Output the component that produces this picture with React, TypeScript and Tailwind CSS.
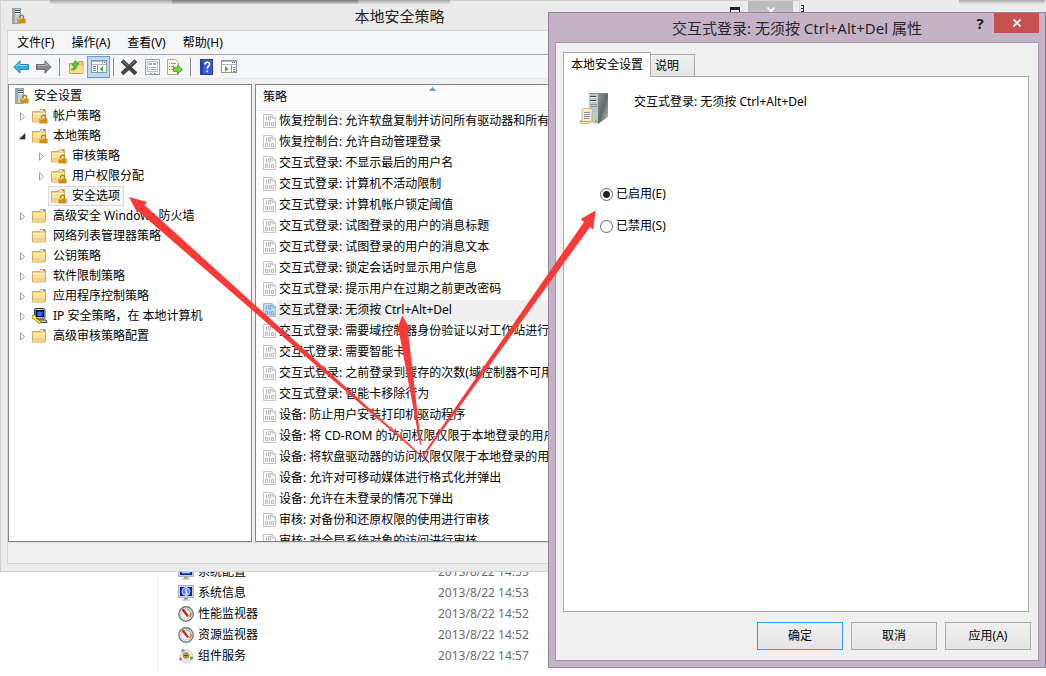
import React, { useState } from "react";

const policies = [
  "恢复控制台: 允许软盘复制并访问所有驱动器和所有文件夹",
  "恢复控制台: 允许自动管理登录",
  "交互式登录: 不显示最后的用户名",
  "交互式登录: 计算机不活动限制",
  "交互式登录: 计算机帐户锁定阈值",
  "交互式登录: 试图登录的用户的消息标题",
  "交互式登录: 试图登录的用户的消息文本",
  "交互式登录: 锁定会话时显示用户信息",
  "交互式登录: 提示用户在过期之前更改密码",
  "交互式登录: 无须按 Ctrl+Alt+Del",
  "交互式登录: 需要域控制器身份验证以对工作站进行解锁",
  "交互式登录: 需要智能卡",
  "交互式登录: 之前登录到缓存的次数(域控制器不可用时)",
  "交互式登录: 智能卡移除行为",
  "设备: 防止用户安装打印机驱动程序",
  "设备: 将 CD-ROM 的访问权限仅限于本地登录的用户",
  "设备: 将软盘驱动器的访问权限仅限于本地登录的用户",
  "设备: 允许对可移动媒体进行格式化并弹出",
  "设备: 允许在未登录的情况下弹出",
  "审核: 对备份和还原权限的使用进行审核",
  "审核: 对全局系统对象的访问进行审核",
];

type NodeIcon = "lock" | "folder" | "ip";
type TreeNode = {
  label: string;
  level: 1 | 2;
  icon: NodeIcon;
  state: "closed" | "open" | "leaf";
  selected?: boolean;
};

const tree: TreeNode[] = [
  { label: "帐户策略", level: 1, icon: "lock", state: "closed" },
  { label: "本地策略", level: 1, icon: "lock", state: "open" },
  { label: "审核策略", level: 2, icon: "lock", state: "closed" },
  { label: "用户权限分配", level: 2, icon: "lock", state: "closed" },
  { label: "安全选项", level: 2, icon: "lock", state: "leaf", selected: true },
  { label: "高级安全 Windows 防火墙", level: 1, icon: "folder", state: "closed" },
  { label: "网络列表管理器策略", level: 1, icon: "folder", state: "leaf" },
  { label: "公钥策略", level: 1, icon: "folder", state: "closed" },
  { label: "软件限制策略", level: 1, icon: "folder", state: "closed" },
  { label: "应用程序控制策略", level: 1, icon: "folder", state: "closed" },
  { label: "IP 安全策略，在 本地计算机", level: 1, icon: "ip", state: "closed" },
  { label: "高级审核策略配置", level: 1, icon: "folder", state: "closed" },
];

const tools = [
  { name: "系统配置", date: "2013/8/22 14:53", icon: "config" },
  { name: "系统信息", date: "2013/8/22 14:53", icon: "info" },
  { name: "性能监视器", date: "2013/8/22 14:52", icon: "gauge" },
  { name: "资源监视器", date: "2013/8/22 14:52", icon: "gauge" },
  { name: "组件服务", date: "2013/8/22 14:57", icon: "component" },
];

function Padlock({ x, y }: { x: number; y: number }) {
  return (
    <g transform={`translate(${x} ${y})`}>
      <path d="M2 4.500V2.800a2 2 0 0 1 4 0v1.700" fill="none" stroke="#a8801e" strokeWidth="1.400" />
      <rect x="0" y="4" width="8" height="5" fill="#e0a526" />
      <path d="M0 5.500h8M0 7.500h8" stroke="#b57f12" strokeWidth="1" />
      <rect x="0.500" y="4" width="3" height="1" fill="#f8d877" />
    </g>
  );
}

function ServerLockIcon() {
  return (
    <svg width="14" height="16" viewBox="0 0 14 16" className="shrink-0" aria-hidden="true">
      <rect x="0.500" y="0.500" width="8" height="15" fill="#c3cdd3" stroke="#93a1a9" />
      <rect x="1" y="1" width="2" height="14" fill="#9aabb5" />
      <path d="M3 2.500h5M3 4.500h5" stroke="#3a4b54" />
      <path d="M3 3.500h5M3 5.500h5" stroke="#f3fafc" />
      <rect x="5" y="11" width="2" height="1" fill="#3bc449" />
      <Padlock x={5.5} y={6.5} />
    </svg>
  );
}

function FolderIcon({ locked }: { locked?: boolean }) {
  return (
    <svg width="16" height="16" viewBox="1 0 16 16" className="shrink-0" aria-hidden="true">
      <path d="M1.500 3.500h7l1-2h5v12.500h-13z" fill="#f0cf84" stroke="#d3ac5e" />
      <path d="M10 2.500h4" stroke="#fff" />
      <rect x="12" y="2" width="2" height="1" fill="#4a93d8" />
      <path d="M2 5h12v8.500H2z" fill="#fae3a2" />
      <path d="M2 10h12v3.500H2z" fill="#f4d487" />
      <path d="M2 5.500h12" stroke="#fff3c8" />
      {locked && <Padlock x={8.5} y={6.5} />}
    </svg>
  );
}

function IpIcon() {
  return (
    <svg width="16" height="16" viewBox="1 0 16 16" className="shrink-0" aria-hidden="true">
      <path d="M4 .5h9l1 1.500v8l-1.500 1H3.500V1z" fill="#bdbdbd" stroke="#444" />
      <rect x="5" y="2.500" width="7.500" height="6" fill="#0a17d6" stroke="#111" />
      <path d="M6.500 5h5M6.500 7h4" stroke="#5ad4ff" />
      <path d="M5 12h10l1 2.500H7z" fill="#d5d5d5" stroke="#444" />
      <path d="M1 7.500l2-1 2 1.500v2l5 4-1 1.500-2-.5-4-4-2-.5z" fill="#f5ee28" stroke="#5f5a00" strokeWidth=".6" />
    </svg>
  );
}

function PolicyIcon({ selected }: { selected?: boolean }) {
  const ink = selected ? "#7ba7d2" : "#b9b9bf";
  return (
    <svg width="14" height="14" viewBox="0 0 14 14" className="shrink-0" aria-hidden="true">
      <path d="M.5.500h8.500l3.500 3.500v9.500H.5z" fill={selected ? "#bfdcf7" : "#fafafa"} stroke={selected ? "#8fb9e0" : "#c6c6ca"} />
      <path d="M9 .5v3.500h3.500" fill="none" stroke={ink} />
      <path d="M3.500 2.500v4M5.500 2.500h2v3.500h-2zM2.500 8.500h2v3h-2zM6.500 8v4M8.500 8.500h2v3h-2z" fill="none" stroke={ink} />
    </svg>
  );
}

function ToolIcon({ kind }: { kind: string }) {
  if (kind === "gauge")
    return (
      <svg width="16" height="16" viewBox="0 0 16 16" className="shrink-0" aria-hidden="true">
        <circle cx="8" cy="8" r="7.200" fill="#f7f7f5" stroke="#777" strokeWidth="1.400" />
        <circle cx="8" cy="8" r="5.200" fill="none" stroke="#c9c4b7" />
        <path d="M8 3a5 5 0 0 1 4 8" fill="none" stroke="#91a287" />
        <path d="M12.800 7a5 5 0 0 1-1 4" fill="none" stroke="#e76c2c" strokeWidth="1.300" />
        <path d="M3.500 4l2-1.500 5.500 7.500-1.800 1z" fill="#cf1c1c" />
      </svg>
    );
  if (kind === "component")
    return (
      <svg width="16" height="16" viewBox="0 0 16 16" className="shrink-0" aria-hidden="true">
        <circle cx="8.500" cy="8.500" r="6.500" fill="#e3e8ea" stroke="#ccd3d7" />
        <circle cx="5" cy="2.500" r="1.800" fill="#8f9bdf" />
        <circle cx="2.500" cy="11" r="1.600" fill="#dc6767" />
        <circle cx="13.500" cy="10" r="1.600" fill="#4caa50" />
        <circle cx="8" cy="7.500" r="2.800" fill="#efc52c" stroke="#85681b" strokeWidth=".8" />
        <path d="M8 5.500v4M6 7.500h4" stroke="#644b0b" />
      </svg>
    );
  return (
    <svg width="16" height="16" viewBox="0 0 16 16" className="shrink-0" aria-hidden="true">
      <rect x=".5" y=".5" width="15" height="12" fill="#d3d1c6" stroke="#b5b5ae" />
      <rect x="2" y="2" width="12" height="9" fill="#0d1eaf" />
      {kind === "info" ? (
        <>
          <circle cx="8" cy="6.500" r="4" fill="#5683f2" stroke="#d5e5ff" />
          <path d="M8 3.800v1.200M7 6h1.500v3M6.800 9h3" fill="none" stroke="#fff" strokeWidth="1.200" />
        </>
      ) : (
        <path d="M4 3h8v6H4z" fill="#e9f1ff" stroke="#6caaff" />
      )}
      <path d="M6 13h4v1.500H6z" fill="#999" />
      <path d="M4 15h8" stroke="#aaa" />
    </svg>
  );
}

function ArrowGlyph({ back }: { back?: boolean }) {
  return (
    <svg width="16" height="14" viewBox="0 0 16 14" aria-hidden="true">
      <path
        d={back ? "M.8 7L7 .8v3.700h8.500v5H7v3.700z" : "M15.200 7L9 .8v3.700H.5v5H9v3.700z"}
        fill={back ? "#35acef" : "#8b8b8b"}
        stroke={back ? "#2b85bd" : "#6b6b6b"}
      />
      <path d={back ? "M3 6.500L6 3.500v2h8" : "M2 5.500h8v-2l3 3"} fill="none" stroke={back ? "#8edbfc" : "#b5b5b5"} />
    </svg>
  );
}

function FolderUpGlyph() {
  return (
    <svg width="15" height="16" viewBox="0 0 15 16" aria-hidden="true">
      <path d="M.5 4.500h8l1-2h4.500v12H.5z" fill="#f0cc7a" stroke="#c9a558" />
      <path d="M1 7h13v7H1z" fill="#f8dc92" />
      <path d="M2.500 10c1.800-.5 2.500-1.500 2.500-4H3L6.500 1.500 10 5 8 6c0 3.500-2 5.500-5.500 5z" fill="#4fcb3a" stroke="#2f9a28" strokeWidth=".7" />
    </svg>
  );
}

function PaneGlyph({ right }: { right?: boolean }) {
  return (
    <svg width="16" height="14" viewBox="0 0 16 14" aria-hidden="true">
      <rect x=".5" y=".5" width="15" height="12" fill="#fdfdfd" stroke="#8d949d" />
      <path d="M1 1.500h14M1 4.500h14" stroke="#b2b9c1" />
      <path d="M11 2.500h1m1 0h1" stroke="#4b5c72" />
      {right ? (
        <>
          <path d="M10.500 5v8" stroke="#8b929a" />
          <path d="M12 7.500h2.500M12 9.500h2.500M12 11.500h2.500" stroke="#5580b1" />
          <path d="M4 6v6l3.500-3z" fill="#45b336" />
        </>
      ) : (
        <>
          <path d="M6.500 5v8" stroke="#8b929a" />
          <path d="M2 6.500h3M2 8.500h3M2 10.500h3" stroke="#5580b1" />
          <path d="M12 6v6L8.500 9z" fill="#45b336" />
        </>
      )}
    </svg>
  );
}

function DeleteGlyph() {
  return (
    <svg width="16" height="16" viewBox="0 0 16 16" aria-hidden="true">
      <path d="M2.500 3l11 10.500M13.500 3L2.500 13.500" stroke="#454545" strokeWidth="4" strokeLinecap="square" />
      <path d="M2.500 2.500l5 4.500M13.500 2.500L9 6.500" stroke="#808080" strokeWidth="1" />
    </svg>
  );
}

function PropertiesGlyph() {
  return (
    <svg width="15" height="16" viewBox="0 0 15 16" aria-hidden="true">
      <rect x=".5" y=".5" width="14" height="15" fill="#fff" stroke="#9a9fa4" />
      <rect x="2.500" y="2.500" width="10" height="10" fill="#f3f5f7" stroke="#bcc2c8" />
      <path d="M4 4h3v2H4zM8 4h3v2H8z" fill="#a2acb7" />
      <path d="M4 8.500h1M6 8.500h5M4 10.500h1M6 10.500h5" stroke="#98a6b5" />
      <path d="M5 14.500h2M9 14.500h2" stroke="#58bbe9" />
    </svg>
  );
}

function ExportGlyph() {
  return (
    <svg width="16" height="16" viewBox="0 0 16 16" aria-hidden="true">
      <path d="M.5.500h8l3 3v12H.5z" fill="#fffbe2" stroke="#b0aa92" />
      <path d="M2 4.500h1M4 4.500h5M2 7.500h1M4 7.500h3M2 10.500h1M4 10.500h3" stroke="#8b8fbb" />
      <path d="M6.500 8.500h4V6l5 4.500-5 4.500v-2.500h-4z" fill="#6adb3e" stroke="#3f9d24" strokeWidth=".8" />
    </svg>
  );
}

function HelpGlyph() {
  return (
    <svg width="13" height="16" viewBox="0 0 13 16" aria-hidden="true">
      <rect x=".5" y=".5" width="12" height="15" fill="#3f5bcf" stroke="#2a3f9c" />
      <path d="M1 1h2v14H1z" fill="#263c9e" />
      <path d="M5 5.500c0-3 4.500-3 4.500-.3 0 2-2.200 2-2.200 4.500M7.300 11.500v1.700" fill="none" stroke="#fff" strokeWidth="1.600" />
    </svg>
  );
}

function ServerScrollIcon() {
  return (
    <svg width="32" height="32" viewBox="0 0 32 32" className="shrink-0" aria-hidden="true">
      <defs>
        <linearGradient id="tower" x1="0" x2="1" y1="0" y2="1">
          <stop offset="0" stopColor="#8f9896" />
          <stop offset=".5" stopColor="#616b69" />
          <stop offset="1" stopColor="#c2cccb" />
        </linearGradient>
      </defs>
      <path d="M10 1h19l-1 1-9 1-9-1z" fill="#87938f" />
      <path d="M10 2h9v30l-9-2z" fill="#bccace" />
      <path d="M19 2l10-1v24l-10 7z" fill="url(#tower)" />
      <path d="M11 4.500h6M11 8.500h6" stroke="#38474d" />
      <path d="M11 5.500h6M11 9.500h6" stroke="#f2f8f9" />
      <path d="M11 12.500h7M11 14.500h7" stroke="#8597a0" />
      <rect x="16" y="28" width="2" height="2" fill="#70cf22" />
      <path d="M3 17.500c1-1.500 9-1.500 11 0 1 1 0 2-1 2v9.500l-2 2.500H2c-2-1-1.500-4 1-3z" fill="#f5eac6" stroke="#bda86b" strokeWidth=".8" />
      <path d="M5 20.500h6M5 22.500h6M5 24.500h6M5 26.500h5" stroke="#8390ae" />
      <path d="M1 29.500h10.500" stroke="#c6ad6b" />
    </svg>
  );
}

function ToolButton({ label, active, children }: { label: string; active?: boolean; children: React.ReactNode }) {
  return (
    <button
      type="button"
      aria-label={label}
      aria-pressed={active}
      className={
        active
          ? "flex h-[22px] w-[23px] items-center justify-center border border-[#5fa0de] bg-[#bcdaf5]"
          : "flex h-[22px] w-4 items-center justify-center"
      }
    >
      {children}
    </button>
  );
}

function Divider() {
  return <span className="h-[18px] w-px bg-[#8c8c8c]" />;
}

function Expander({ state }: { state: TreeNode["state"] }) {
  if (state === "leaf") return <span className="w-2.5" />;
  return (
    <button type="button" aria-label={state === "open" ? "折叠" : "展开"} className="w-2.5">
      <svg width="7" height="9" viewBox="0 0 7 9" aria-hidden="true">
        {state === "open" ? (
          <path d="M6 1.500v5.500H.5z" fill="#2b2b2b" stroke="#2b2b2b" strokeWidth=".6" />
        ) : (
          <path d="M1.500.800v7.400L5.500 4.500z" fill="#fff" stroke="#a0a0a0" />
        )}
      </svg>
    </button>
  );
}

function TreePane() {
  return (
    <nav aria-label="安全设置" className="w-[244px] shrink-0 border border-[#828790] bg-white pt-px">
      <div className="flex h-5 items-center gap-[5px] pl-1.5">
        <ServerLockIcon />
        <span>安全设置</span>
      </div>
      <ul>
        {tree.map((node) => (
          <li key={node.label} className={node.level === 1 ? "flex h-5 items-center pl-2.5" : "flex h-5 items-center pl-[29px]"}>
            <Expander state={node.state} />
            <span
              className={
                node.selected
                  ? "flex h-5 items-center gap-[5px] border border-[#d9d9d9] bg-[#f7f7f7] pr-[3px] pl-0.5"
                  : "flex h-5 items-center gap-[5px] border border-transparent pl-0.5"
              }
            >
              {node.icon === "ip" ? <IpIcon /> : <FolderIcon locked={node.icon === "lock"} />}
              <span className="whitespace-nowrap">{node.label}</span>
            </span>
          </li>
        ))}
      </ul>
    </nav>
  );
}

function PolicyPane() {
  return (
    <div className="min-w-0 flex-1 overflow-hidden border border-[#828790] bg-white">
      <table className="w-full border-collapse">
        <thead>
          <tr>
            <th className="relative h-[25px] border-b border-[#e3eefa] bg-[#fcfcfc] p-0 pl-[7px] text-left font-normal">
              策略
              <svg width="7" height="4" viewBox="0 0 7 4" className="absolute top-0.5 left-[173px]" aria-hidden="true">
                <path d="M0 4l3.500-4L7 4z" fill="#5c9cbd" />
              </svg>
            </th>
          </tr>
        </thead>
        <tbody>
          {policies.map((policy, index) => (
            <tr key={policy}>
              <td className="h-[21px] p-0">
                <div className="flex h-[21px] items-center pl-[7px]">
                  <PolicyIcon selected={index === 9} />
                  <span
                    className={
                      index === 9
                        ? "flex h-[21px] flex-1 items-center bg-[#efefef] pl-0.5 whitespace-nowrap"
                        : "flex h-[21px] flex-1 items-center pl-0.5 whitespace-nowrap"
                    }
                  >
                    {policy}
                  </span>
                </div>
              </td>
            </tr>
          ))}
        </tbody>
      </table>
    </div>
  );
}

function ConsoleWindow() {
  return (
    <section className="absolute top-0 left-0 w-[800px] border border-[#d0d0d0] bg-[#ebebeb] px-1.5 pb-[7px]">
      <header className="relative flex h-[29px] items-center pl-[5px]">
        <ServerLockIcon />
        <h1 className="flex-1 pr-5 text-center text-[15px] text-[#222]">本地安全策略</h1>
        <div className="absolute top-0 right-0 flex items-start">
          <button type="button" aria-label="最大化" className="flex h-5 w-[27px] items-center justify-center">
            <span className="h-2 w-2.5 border border-t-3 border-[#222]" />
          </button>
          <button type="button" aria-label="关闭" className="flex h-5 w-[45px] items-center justify-center bg-[#bcbcbc] text-white">
            <svg width="8" height="8" viewBox="0 0 8 8" aria-hidden="true">
              <path d="M.5.500l7 7M7.500.500l-7 7" stroke="currentColor" strokeWidth="1.600" />
            </svg>
          </button>
        </div>
      </header>
      <div className="border border-[#d5d5d5] bg-[#f0f0f0]">
        <menu className="flex h-6 items-center gap-[17px] border-b border-[#a9abb0] bg-[#f5f6f7] pl-[9px]">
          {["文件(F)", "操作(A)", "查看(V)", "帮助(H)"].map((item) => (
            <li key={item}>
              <button type="button">{item}</button>
            </li>
          ))}
        </menu>
        <div className="flex h-[23px] items-end bg-[#f5f6f7] pl-[5px]">
          <div className="flex items-center gap-[7px]">
            <ToolButton label="后退"><ArrowGlyph back /></ToolButton>
            <ToolButton label="前进"><ArrowGlyph /></ToolButton>
            <Divider />
          </div>
          <div className="flex items-center gap-[3px] pl-2">
            <ToolButton label="上移一级"><FolderUpGlyph /></ToolButton>
            <ToolButton label="显示/隐藏控制台树" active><PaneGlyph /></ToolButton>
            <Divider />
          </div>
          <div className="flex items-center gap-[7px] pl-[7px]">
            <ToolButton label="删除"><DeleteGlyph /></ToolButton>
            <ToolButton label="属性"><PropertiesGlyph /></ToolButton>
            <ToolButton label="导出列表"><ExportGlyph /></ToolButton>
            <Divider />
            <ToolButton label="帮助"><HelpGlyph /></ToolButton>
            <ToolButton label="显示/隐藏操作窗格"><PaneGlyph right /></ToolButton>
          </div>
        </div>
        <div className="flex h-[464px] gap-[3px] border-t border-[#e3e5e8] pt-[5px]">
          <TreePane />
          <PolicyPane />
        </div>
        <footer className="h-[21px] border-t border-[#dcdcdc]" />
      </div>
    </section>
  );
}

function ExplorerList() {
  return (
    <section className="absolute top-[561px] left-[158px] w-[390px] border-l border-[#f2f2f2] pb-2">
      <table className="w-full border-collapse">
        <tbody>
          {tools.map((tool) => (
            <tr key={tool.name}>
              <td className="h-[21px] p-0">
                <div className="flex items-center gap-1 pl-[19px]">
                  <ToolIcon kind={tool.icon} />
                  <span>{tool.name}</span>
                </div>
              </td>
              <td className="h-[21px] w-[110px] p-0 whitespace-nowrap text-[#6d6d6d]">{tool.date}</td>
            </tr>
          ))}
        </tbody>
      </table>
    </section>
  );
}

function PropertiesDialog() {
  const [enabled, setEnabled] = useState(true);
  const radio =
    "size-[13px] shrink-0 appearance-none rounded-full border border-[#666] bg-white checked:bg-[radial-gradient(circle,#222_0_3px,#fff_4px)]";
  const button = "h-7 w-[86px] border bg-linear-to-b from-[#f0f0f0] to-[#e4e4e4]";
  return (
    <section
      role="dialog"
      aria-labelledby="dialog-title"
      className="absolute top-3 left-[548px] w-[498px] border border-[#91859a] bg-[#c3b3c5] px-1.5 pb-1.5"
    >
      <header className="relative flex h-[29px] items-center justify-center">
        <h2 id="dialog-title" className="text-[15px] text-[#2b262c]">
          交互式登录: 无须按 Ctrl+Alt+Del 属性
        </h2>
        <div className="absolute top-0 right-0 flex items-center">
          <button type="button" aria-label="帮助" className="h-5 w-7 font-bold text-[#222] text-[15px] leading-5">
            ?
          </button>
          <button type="button" aria-label="关闭" className="flex h-5 w-[45px] items-center justify-center bg-[#c75050]">
            <svg width="8" height="8" viewBox="0 0 8 8" aria-hidden="true">
              <path d="M.5.500l7 7M7.500.500l-7 7" stroke="#fff" strokeWidth="1.600" />
            </svg>
          </button>
        </div>
      </header>
      <div className="border border-[#a596a8] bg-[#f0f0f0] pt-[9px] pb-2.5 pl-[7px]">
        <div role="tablist" className="flex items-end">
          <button
            type="button"
            role="tab"
            aria-selected="true"
            className="z-10 h-[25px] w-[88px] border border-b-0 border-[#acacac] bg-white pl-[7px] text-left"
          >
            本地安全设置
          </button>
          <button
            type="button"
            role="tab"
            aria-selected="false"
            className="h-[23px] w-[44px] border border-l-0 border-[#acacac] bg-linear-to-b from-[#f0f0f0] to-[#e5e5e5] pl-1 text-left"
          >
            说明
          </button>
        </div>
        <div role="tabpanel" className="-mt-px mr-[9px] h-[536px] border border-[#acacac] bg-white p-[15px]">
          <div className="flex gap-[23px]">
            <ServerScrollIcon />
            <p className="leading-5">交互式登录: 无须按 Ctrl+Alt+Del</p>
          </div>
          <fieldset className="mt-[60px] ml-[21px] flex flex-col gap-3">
            <label className="flex h-5 items-center gap-[3px]">
              <input type="radio" name="policy" className={radio} checked={enabled} onChange={() => setEnabled(true)} />
              已启用(E)
            </label>
            <label className="flex h-5 items-center gap-[3px]">
              <input type="radio" name="policy" className={radio} checked={!enabled} onChange={() => setEnabled(false)} />
              已禁用(S)
            </label>
          </fieldset>
        </div>
        <div className="mt-2.5 mr-[7px] flex justify-end gap-2">
          <button type="button" className={`${button} border-[#3399ff]`}>确定</button>
          <button type="button" className={`${button} border-[#acacac]`}>取消</button>
          <button type="button" className={`${button} border-[#acacac]`}>应用(A)</button>
        </div>
      </div>
    </section>
  );
}

function Annotations() {
  return (
    <svg width="1046" height="676" viewBox="0 0 1046 676" className="pointer-events-none absolute top-0 left-0" aria-hidden="true">
      <g fill="#fb3a38">
        <path d="M129 197L147 202L144.500 205L429 462.500L428.500 463L138.500 211.500L137.300 213z" />
        <path d="M402.300 315.500L411 330.500L408 331L421.200 445L420.200 445L399 332L396 332z" />
        <path d="M595.700 210.500L593 229.500L590 227L424 456L422.500 455L584 222L580.700 219z" />
        <path d="M390 426L429 463" stroke="#fb3a38" strokeWidth=".9" />
      </g>
    </svg>
  );
}

export default function App() {
  return (
    <main className="relative min-h-screen overflow-hidden bg-white font-['Noto_Sans','Noto_Sans_CJK_SC',sans-serif] text-[12px] leading-4 text-black">
      <div className="flex h-8 justify-end bg-[#ebebeb]">
        <div className="mr-px h-1 w-[86px] bg-linear-to-b from-[#a8a8a8] to-[#ebebeb]" />
      </div>
      <ExplorerList />
      <ConsoleWindow />
      <div className="absolute top-0 left-[50px] flex h-1">
        <span className="w-[122px] bg-linear-to-b from-[#a0a0a0] to-[#e4e4e4]" />
        <span className="w-[186px] bg-linear-to-b from-[#777] to-[#d0d0d0]" />
        <span className="w-[92px] bg-linear-to-b from-[#a0a0a0] to-[#e4e4e4]" />
      </div>
      <svg width="3" height="8" viewBox="0 0 3 8" className="absolute top-[5px] left-[801px]" aria-hidden="true">
        <path d="M0 .5h3M0 3.500h3M0 6.500h3M2.500 0v8" stroke="#333" />
      </svg>
      <PropertiesDialog />
      <Annotations />
    </main>
  );
}
